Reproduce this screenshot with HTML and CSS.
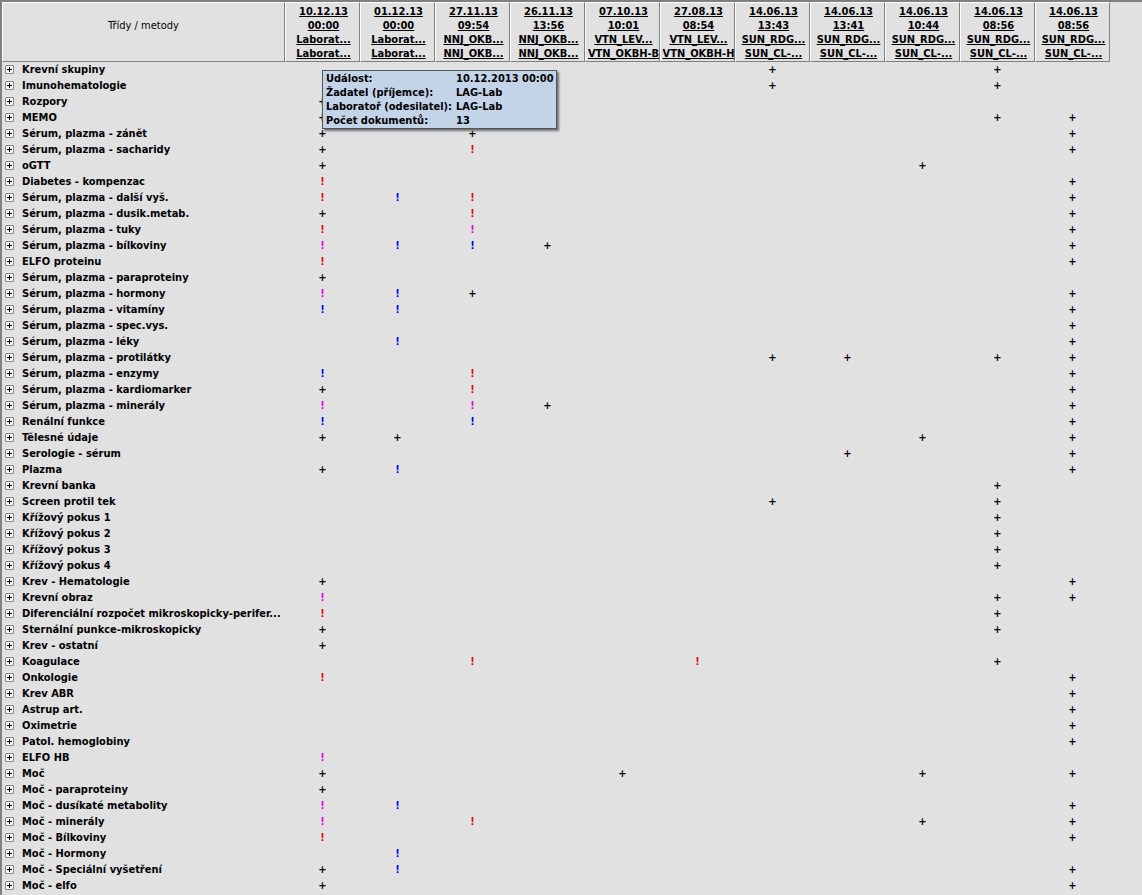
FILE: index.html
```html
<!DOCTYPE html>
<html lang="cs">
<head>
<meta charset="utf-8">
<title>Třídy / metody</title>
<link rel="stylesheet" href="styles.css">
</head>
<body>
<main class="viewer">
  <table class="grid">
    <colgroup>
      <col class="col-name">
      <col class="col-event" span="11">
    </colgroup>
    <thead>
      <tr id="events"><th class="corner" scope="col">Třídy / metody</th></tr>
    </thead>
    <tbody id="classes"></tbody>
  </table>
  <dl class="tooltip" role="tooltip">
    <dt>Událost:</dt><dd>10.12.2013 00:00</dd>
    <dt>Žadatel (příjemce):</dt><dd>LAG-Lab</dd>
    <dt>Laboratoř (odesilatel):</dt><dd>LAG-Lab</dd>
    <dt>Počet dokumentů:</dt><dd>13</dd>
  </dl>
</main>
<script src="app.js"></script>
</body>
</html>
```
FILE: styles.css
```css
* { box-sizing: border-box; }

body {
  margin: 0;
  background: #e1e1e1;
  color: #000;
  font: 11px/14px Tahoma, "DejaVu Sans Condensed", "Noto Sans", sans-serif;
}

.viewer {
  position: relative;
  min-height: 100vh;
  border-top: 2px solid #808080;
  border-left: 2px solid #808080;
}

.grid {
  table-layout: fixed;
  width: 1108px;
  border-collapse: separate;
  border-spacing: 0;
}

.col-name { width: 283px; }
.col-event { width: 75px; }

.grid th, .grid td { padding: 0; }

.grid thead th {
  height: 60px;
  border: 1px solid;
  border-color: #fff #808080 #808080 #fff;
  vertical-align: top;
  white-space: nowrap;
  overflow: hidden;
}

.grid thead .corner {
  padding-top: 16px;
  font-weight: normal;
}

.event {
  display: flex;
  flex-direction: column;
  align-items: center;
  width: 100%;
  padding: 2px 0 0 2px;
  border: 0;
  background: none;
  color: inherit;
  font: inherit;
  font-weight: bold;
  text-decoration: underline;
  text-decoration-skip-ink: none;
}

.grid tbody th {
  height: 16px;
  text-align: left;
  vertical-align: top;
}

.grid tbody td {
  height: 16px;
  line-height: 15px;
  text-align: center;
  font-weight: bold;
  vertical-align: top;
}

.row-name {
  display: flex;
  align-items: center;
  gap: 8px;
  height: 15px;
  padding-left: 3px;
  line-height: 15px;
  white-space: nowrap;
}

.expand {
  display: flex;
  flex: none;
  padding: 0;
  border: 0;
  background: none;
}

.high { color: #e00000; }
.low { color: #0000dc; }
.mixed { color: #e400e4; }

.tooltip {
  position: absolute;
  top: 68px;
  left: 320px;
  display: grid;
  grid-template-columns: 130px auto;
  margin: 0;
  padding: 1px 2px 0 3px;
  border: 1px solid #50545c;
  background: #c3d3e8;
  box-shadow: 2px 2px 2px #707070;
  font-weight: bold;
  white-space: nowrap;
}

.tooltip dd { margin: 0; }
```
FILE: app.js
```js
const events = [
  ["10.12.13", "00:00", "Laborat...", "Laborat..."],
  ["01.12.13", "00:00", "Laborat...", "Laborat..."],
  ["27.11.13", "09:54", "NNJ_OKB...", "NNJ_OKB..."],
  ["26.11.13", "13:56", "NNJ_OKB...", "NNJ_OKB..."],
  ["07.10.13", "10:01", "VTN_LEV...", "VTN_OKBH-B"],
  ["27.08.13", "08:54", "VTN_LEV...", "VTN_OKBH-H"],
  ["14.06.13", "13:43", "SUN_RDG...", "SUN_CL-..."],
  ["14.06.13", "13:41", "SUN_RDG...", "SUN_CL-..."],
  ["14.06.13", "10:44", "SUN_RDG...", "SUN_CL-..."],
  ["14.06.13", "08:56", "SUN_RDG...", "SUN_CL-..."],
  ["14.06.13", "08:56", "SUN_RDG...", "SUN_CL-..."]
];

// One character per event: + present, H high, L low, M mixed, . none
const classes = [
  ["Krevní skupiny", "......+..+."],
  ["Imunohematologie", "......+..+."],
  ["Rozpory", "+.........."],
  ["MEMO", "+........++"],
  ["Sérum, plazma - zánět", "+.+.......+"],
  ["Sérum, plazma - sacharidy", "+.H.......+"],
  ["oGTT", "+.......+.."],
  ["Diabetes - kompenzac", "H.........+"],
  ["Sérum, plazma - další vyš.", "HLH.......+"],
  ["Sérum, plazma - dusik.metab.", "+.H.......+"],
  ["Sérum, plazma - tuky", "H.M.......+"],
  ["Sérum, plazma - bílkoviny", "MLL+......+"],
  ["ELFO proteinu", "H.........+"],
  ["Sérum, plazma - paraproteiny", "+.........."],
  ["Sérum, plazma - hormony", "ML+.......+"],
  ["Sérum, plazma - vitamíny", "LL........+"],
  ["Sérum, plazma - spec.vys.", "..........+"],
  ["Sérum, plazma - léky", ".L........+"],
  ["Sérum, plazma - protilátky", "......++.++"],
  ["Sérum, plazma - enzymy", "L.H.......+"],
  ["Sérum, plazma - kardiomarker", "+.H.......+"],
  ["Sérum, plazma - minerály", "M.M+......+"],
  ["Renální funkce", "L.L.......+"],
  ["Tělesné údaje", "++......+.+"],
  ["Serologie - sérum", ".......+..+"],
  ["Plazma", "+L........+"],
  ["Krevní banka", ".........+."],
  ["Screen protil tek", "......+..+."],
  ["Křížový pokus 1", ".........+."],
  ["Křížový pokus 2", ".........+."],
  ["Křížový pokus 3", ".........+."],
  ["Křížový pokus 4", ".........+."],
  ["Krev - Hematologie", "+.........+"],
  ["Krevní obraz", "M........++"],
  ["Diferenciální rozpočet mikroskopicky-perifer...", "H........+."],
  ["Sternální punkce-mikroskopicky", "+........+."],
  ["Krev - ostatní", "+.........."],
  ["Koagulace", "..H..H...+."],
  ["Onkologie", "H.........+"],
  ["Krev ABR", "..........+"],
  ["Astrup art.", "..........+"],
  ["Oximetrie", "..........+"],
  ["Patol. hemoglobiny", "..........+"],
  ["ELFO HB", "M.........."],
  ["Moč", "+...+...+.+"],
  ["Moč - paraproteiny", "+.........."],
  ["Moč - dusíkaté metabolity", "ML........+"],
  ["Moč - minerály", "M.H.....+.+"],
  ["Moč - Bílkoviny", "H.........+"],
  ["Moč - Hormony", ".L........."],
  ["Moč - Speciální vyšetření", "+L........+"],
  ["Moč - elfo", "+.........+"]
];

const cells = {
  ".": "<td></td>",
  "+": "<td>+</td>",
  H: '<td class="high">!</td>',
  L: '<td class="low">!</td>',
  M: '<td class="mixed">!</td>'
};

const plusIcon = `<svg width="9" height="9" viewBox="0 0 9 9" aria-hidden="true">
  <rect x=".5" y=".5" width="8" height="8" rx=".5" fill="#fafafa" stroke="#858585"/>
  <path d="M2 4.5h5M4.5 2v5" stroke="#000"/></svg>`;

document.getElementById("events").insertAdjacentHTML("beforeend", events.map(lines =>
  `<th scope="col"><button class="event" type="button">${lines.map(t => `<span>${t}</span>`).join("")}</button></th>`
).join(""));

document.getElementById("classes").innerHTML = classes.map(([name, marks]) =>
  `<tr><th scope="row"><div class="row-name"><button class="expand" type="button" aria-label="Rozbalit ${name}">${plusIcon}</button><span>${name}</span></div></th>${[...marks].map(m => cells[m]).join("")}</tr>`
).join("");
```
